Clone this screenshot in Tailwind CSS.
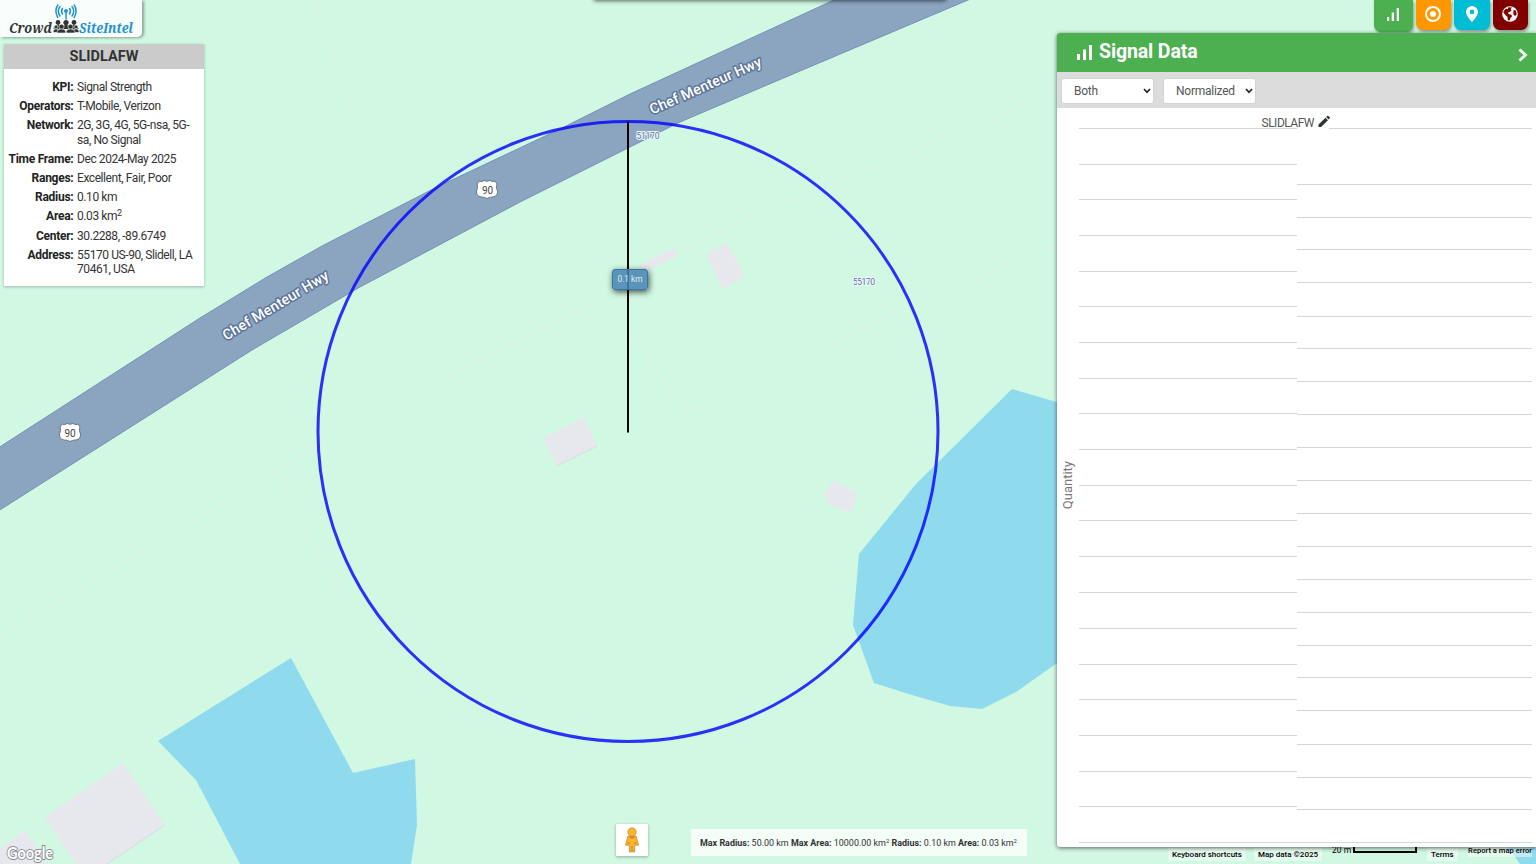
<!DOCTYPE html>
<html lang="en">
<head>
<meta charset="utf-8">
<title>Crowd SiteIntel</title>
<script src="https://cdn.jsdelivr.net/npm/@tailwindcss/browser@4"></script>
</head>
<body class="relative h-[864px] w-[1536px] overflow-hidden bg-[#d1f8e2] font-[Roboto,sans-serif] text-[#333]">

<!-- Map -->
<svg class="absolute inset-0" width="1536" height="864" viewBox="0 0 1536 864">
  <g fill="none" stroke="#d8f2e3" stroke-width="1.500">
    <path d="M0 638L220 505L330 438L470 366L560 320L730 226L1056 92"/>
    <path d="M275 470L350 610M520 742L620 815M635 335L685 413L900 310L1056 245M290 40L318 0L350 105"/>
  </g>
  <path d="M-5 450L200 318L267 277L322 246L355 229L437 187L560 129L630 94L834 0L840 -5H980L968 0L800 71L680 122L628 148L520 202L360 287L252 350L-5 513Z" fill="#8ba5c1" stroke="#7691b5"/>
  <g fill="#90daee">
    <path d="M158 741L291 658L353 773L415 759L417 825L411 864H240L196 780Z"/>
    <path d="M1060 403L1012 389L916 484L859 554L853 625L874 683L912 695L950 706L982 709L1016 692L1060 661Z"/>
    <path d="M1508 847L1520 864H1536V847Z"/>
  </g>
  <g fill="#e7e8ee">
    <path d="M45 817L123 763L165 825L107 864H76Z"/>
    <path d="M0 848L25 830L48 864H0Z"/>
    <path d="M543 438L584 417L597 446L557 466Z"/>
    <path d="M824 494L834 480L858 493L850 513L828 504Z"/>
    <path d="M706 254L727 243L745 276L723 289Z"/>
    <path d="M640 264L674 248L679 255L645 271Z"/>
  </g>
  <path d="M557 466L597 446M107 864L165 825" stroke="#d9dae1" fill="none"/>
  <g font-family="Roboto, sans-serif" font-size="14.500" font-weight="500" fill="#fff" stroke="#5d7599" stroke-width="3" stroke-linejoin="round" paint-order="stroke" text-anchor="middle">
    <text transform="translate(278 309.500) rotate(-31)" textLength="121">Chef Menteur Hwy</text>
    <text transform="translate(707.500 90) rotate(-24)" textLength="121">Chef Menteur Hwy</text>
  </g>
  <g font-family="Roboto, sans-serif" font-size="8.500" fill="#5b72a0" stroke="#eef6fa" stroke-width="2" paint-order="stroke" text-anchor="middle">
    <text x="648" y="138.500" textLength="23">51170</text>
    <text x="864" y="284.500" textLength="22">55170</text>
  </g>
  <g fill="#fff" stroke="#6e7780">
    <path d="M479 181Q482 182.500 484 180.500Q487 182 490 180.500Q493 182.500 495 181L497 184Q495.500 187 497.500 191Q498 196 493 197Q489 197 487 198.500Q485 197 481 197Q476 196 476.500 191Q478.500 187 477 184Z"/>
    <path transform="translate(-417 243)" d="M479 181Q482 182.500 484 180.500Q487 182 490 180.500Q493 182.500 495 181L497 184Q495.500 187 497.500 191Q498 196 493 197Q489 197 487 198.500Q485 197 481 197Q476 196 476.500 191Q478.500 187 477 184Z"/>
  </g>
  <g font-family="Roboto, sans-serif" font-size="10" fill="#444" text-anchor="middle">
    <text x="487.500" y="194">90</text><text x="70" y="437">90</text>
  </g>
  <circle cx="628" cy="431.500" r="310" fill="none" stroke="#0000ff" stroke-opacity=".8" stroke-width="3"/>
  <path d="M628 121.500V432.500" stroke="#000" stroke-width="2"/>
  <text x="7" y="858.500" font-family="Lato, sans-serif" font-size="17" font-weight="bold" fill="#fff" stroke="#8b9095" stroke-width="2" paint-order="stroke" textLength="46" lengthAdjust="spacingAndGlyphs">Google</text>
</svg>

<div class="absolute left-[612px] top-[269px] flex h-[21px] w-9 items-center justify-center rounded-[3px] border border-[#3c75a0] bg-[#4682b4]/85 text-[8.300px] text-white/80 shadow-[1px_2px_6px_rgba(0,0,0,.7)]">0.1 km</div>
<div class="absolute -top-5 left-[593px] h-5 w-[354px] rounded bg-white shadow-[0_1px_4px_rgba(0,0,0,.6)]"></div>

<!-- Logo -->
<div class="absolute left-0 top-0 h-[37px] w-[142px] rounded-br-[5px] bg-white/85 shadow-[2px_1px_3px_rgba(0,0,0,.35)]">
  <svg width="142" height="37" viewBox="0 0 142 37">
    <g font-family="Noto Serif, DejaVu Serif, serif" font-size="14" font-style="italic" font-weight="bold">
      <text x="9" y="33" fill="#333" textLength="43" lengthAdjust="spacingAndGlyphs">Crowd</text>
      <text x="79" y="33" fill="#2591cc" textLength="54" lengthAdjust="spacingAndGlyphs">SiteIntel</text>
    </g>
    <g fill="none" stroke="#2492cf" stroke-width="1.500" stroke-linecap="round">
      <path d="M66 12V19M62.500 8.500Q60.500 11 62.500 14M69.500 8.500Q71.500 11 69.500 14M60 6.500Q56.500 11 60 16M72 6.500Q75.500 11 72 16M57.800 5Q54 11 57.800 17.500M74.200 5Q78 11 74.200 17.500"/>
    </g>
    <circle cx="66" cy="11" r="2" fill="#2492cf"/>
    <g fill="#333">
      <circle cx="58" cy="22.500" r="2.400"/><circle cx="66" cy="22.500" r="2.600"/><circle cx="74" cy="22.500" r="2.400"/>
      <path d="M53.500 29Q54 25 58 25T62 29ZM62 29Q62 25 66 25T70 29ZM70 29Q70 25 74 25T78.500 29Z"/>
      <g stroke="#f5fefa" stroke-width=".6">
        <circle cx="56" cy="27" r="1.900"/><circle cx="76" cy="27" r="1.900"/>
        <path d="M53 32.500Q53 28.800 56 28.800T59.500 32.500ZM72.500 32.500Q72.500 28.800 76 28.800T79 32.500Z"/>
        <circle cx="61.500" cy="26.800" r="2.600"/><circle cx="70.500" cy="26.800" r="2.600"/>
        <path d="M57 33Q57 29 61.500 29T66 33ZM66 33Q66 29 70.500 29T75 33Z"/>
      </g>
    </g>
  </svg>
</div>

<!-- Site summary -->
<section class="absolute left-1 top-11 h-[242px] w-[200px] bg-white shadow-[0_1px_3px_rgba(0,0,0,.25)]">
  <h2 class="flex h-[25px] items-center justify-center bg-[#cbcbcb] pt-px text-[14.500px] font-bold">SLIDLAFW</h2>
  <dl class="grid grid-cols-[69.500px_1fr] gap-x-[3.500px] gap-y-[5px] pt-[11px] text-[12px] leading-[14.200px] tracking-[-0.420px] [&>dt]:text-right [&>dt]:tracking-[-0.250px] [&>dt]:font-bold [&>dt]:whitespace-nowrap [&>dt]:text-[#222]">
    <dt>KPI:</dt><dd>Signal Strength</dd>
    <dt>Operators:</dt><dd>T-Mobile, Verizon</dd>
    <dt>Network:</dt><dd>2G, 3G, 4G, 5G-nsa, 5G-<br>sa, No Signal</dd>
    <dt>Time Frame:</dt><dd>Dec 2024-May 2025</dd>
    <dt>Ranges:</dt><dd>Excellent, Fair, Poor</dd>
    <dt>Radius:</dt><dd>0.10 km</dd>
    <dt>Area:</dt><dd>0.03 km<sup class="text-[9px] leading-none">2</sup></dd>
    <dt>Center:</dt><dd>30.2288, -89.6749</dd>
    <dt>Address:</dt><dd>55170 US-90, Slidell, LA<br>70461, USA</dd>
  </dl>
</section>

<!-- Street view figure -->
<div class="absolute left-[616px] top-[824px] flex size-8 items-center justify-center bg-white shadow-[0_1px_3px_rgba(0,0,0,.3)]">
  <svg width="16" height="26" viewBox="0 0 16 26"><path d="M4 9L1.500 18L4 18.500L5 15L5.500 25H7.700L8 19L8.500 25H10.500L11 15L12 18.500L14.500 18L12 9Z" fill="#fbb52a" stroke="#c68a2c" stroke-width=".8"/><circle cx="8" cy="5" r="4.200" fill="#fbb52a" stroke="#c68a2c" stroke-width=".7"/><path d="M5 9.500L8 12L11 9.500Z" fill="#e0762b"/></svg>
</div>
<div class="absolute left-[691px] top-[829px] flex h-[27px] w-[336px] items-center bg-white/75 pl-[9px] pt-px text-[8.950px] whitespace-nowrap">
  <p class="leading-none"><b>Max Radius:</b> 50.00 km <b>Max Area:</b> 10000.00 km<sup class="text-[6px]">2</sup> <b>Radius:</b> 0.10 km <b>Area:</b> 0.03 km<sup class="text-[6px]">2</sup></p>
</div>

<!-- Map attribution -->
<footer class="absolute left-[1168px] top-[844px] h-5 w-[368px] text-[8px] font-medium leading-[12px] text-black">
  <span class="absolute left-0 top-1 bg-white/45 px-1 pt-px whitespace-nowrap">Keyboard shortcuts</span>
  <span class="absolute left-[86px] top-1 bg-white/45 px-1 pt-px whitespace-nowrap">Map data ©2025</span>
  <span class="absolute left-[164px] top-0 text-[8.500px] font-normal whitespace-nowrap">20 m</span>
  <span class="absolute left-[185px] top-0 h-[9px] w-16 border-2 border-t-0 border-black"></span>
  <span class="absolute left-[259px] top-1 bg-white/45 px-1 pt-px">Terms</span>
  <span class="absolute right-1 top-px bg-white/45 text-[7.600px] whitespace-nowrap">Report a map error</span>
</footer>

<!-- Panel tabs -->
<nav class="absolute right-2 top-0 flex items-start gap-[3px] [&>span]:flex [&>span]:items-center [&>span]:justify-center [&>span]:rounded-b-[7px] [&>span]:shadow-[1px_2px_3px_rgba(0,0,0,.35)]">
  <span class="h-8 w-[38.500px] bg-[#4caf50] pb-1"><svg width="14" height="14" viewBox="0 0 14 14" fill="#fff"><path d="M1 10H3.200V14H1ZM5.700 5.500H8V14H5.700ZM10.700 1H13V14H10.700Z"/></svg></span>
  <span class="h-[30px] w-[35.500px] bg-[#ff9800] pb-[3px]"><svg width="18" height="18" viewBox="0 0 18 18"><circle cx="9" cy="9" r="7" fill="none" stroke="#fff" stroke-width="2"/><circle cx="9" cy="9" r="3" fill="#fff"/></svg></span>
  <span class="h-[30px] w-[35.500px] bg-[#00bcd4] pb-[2px]"><svg width="14" height="18" viewBox="0 0 14 18"><path fill="#fff" fill-rule="evenodd" d="M7 1A6 6 0 0 0 1 7C1 11 7 17 7 17S13 11 13 7A6 6 0 0 0 7 1ZM7 4.500A2.400 2.400 0 1 1 7 9.300A2.400 2.400 0 1 1 7 4.500Z"/></svg></span>
  <span class="h-[30px] w-[35.500px] bg-[#800000] pb-[3px]"><svg width="16" height="16" viewBox="0 0 16 16"><circle cx="8" cy="8" r="7.800" fill="#fff"/><path d="M6.500 1.200L10 1.500L8.800 3L9.500 4.500L8 5.800L6.600 6.200L6.300 8L9.500 8.700L10 10.500L8.500 12L7.500 14.700L5.800 14L5.500 11L3.500 9.300L1.300 6.200Q2 4 4 2.500L5.500 3.300ZM11.500 4.200L13.300 4Q14.700 6 14.700 8.600L13 10L11.300 8.300Z" fill="#800000"/></svg></span>
</nav>

<!-- Signal data panel -->
<aside class="absolute left-[1057px] top-[33px] flex h-[814px] w-[479px] flex-col rounded-l-[3px] bg-white shadow-[0_1px_4px_rgba(0,0,0,.6)]">
  <header class="flex h-[39px] shrink-0 items-center rounded-tl-[3px] bg-[#4caf50] pl-5 pr-2 text-white">
    <svg class="-mt-[2px]" width="16" height="16" viewBox="0 0 16 16" fill="#fff"><path d="M0 10H3V16H0ZM6 5.500H9V16H6ZM12 1H15V16H12Z"/></svg>
    <h1 class="-mt-px ml-[6px] text-[19.500px] font-bold leading-none tracking-[-0.120px]">Signal Data</h1>
    <svg class="ml-auto mt-1" width="11" height="14" viewBox="0 0 11 14" fill="none" stroke="#fff" stroke-width="2.800"><path d="M2.500 1.500L8.500 7L2.500 12.500"/></svg>
  </header>
  <div class="flex h-9 shrink-0 items-center gap-[9px] bg-[#dcdcdc] pl-1 pt-px text-[12px] tracking-[-0.250px] text-[#555]">
    <div class="flex h-[26px] w-[93px] items-center justify-between rounded-[3px] border border-[#d3d3d3] bg-white pl-3 pr-[2px]">Both<svg width="8" height="6" viewBox="0 0 8 6" fill="none" stroke="#222" stroke-width="1.700"><path d="M1 1L4 4.300L7 1"/></svg></div>
    <div class="flex h-[26px] w-[93px] items-center justify-between rounded-[3px] border border-[#d3d3d3] bg-white pl-3 pr-[2px]">Normalized<svg width="8" height="6" viewBox="0 0 8 6" fill="none" stroke="#222" stroke-width="1.700"><path d="M1 1L4 4.300L7 1"/></svg></div>
  </div>
  <div class="flex min-h-0 flex-1">
    <div class="flex w-[22px] shrink-0 items-center justify-center pt-[16px]"><span class="rotate-180 text-[13px] text-[#777] [writing-mode:vertical-rl]">Quantity</span></div>
    <svg width="457" height="739" viewBox="1079 108 457 739">
      <path stroke="#d6d6d6" d="M1079 128.500H1297M1079 164.500H1297M1079 199.500H1297M1079 235.500H1297M1079 271.500H1297M1079 306.500H1297M1079 342.500H1297M1079 378.500H1297M1079 413.500H1297M1079 449.500H1297M1079 485.500H1297M1079 520.500H1297M1079 556.500H1297M1079 592.500H1297M1079 628.500H1297M1079 664.500H1297M1079 699.500H1297M1079 735.500H1297M1079 771.500H1297M1079 806.500H1297M1079 842.500H1532M1329 128.500H1532M1297 184.500H1532M1297 217.500H1532M1297 249.500H1532M1297 282.500H1532M1297 316.500H1532M1297 348.500H1532M1297 381.500H1532M1297 414.500H1532M1297 447.500H1532M1297 480.500H1532M1297 513.500H1532M1297 546.500H1532M1297 579.500H1532M1297 612.500H1532M1297 645.500H1532M1297 677.500H1532M1297 710.500H1532M1297 744.500H1532M1297 777.500H1532M1297 809.500H1532"/>
      <text x="1261.500" y="126.500" font-size="12" fill="#555" font-family="Roboto, sans-serif" textLength="53">SLIDLAFW</text>
      <path fill="#333" d="M1318.500 127V124.500L1325.500 117.700L1328 120.200L1321 127ZM1326.200 117L1327.600 115.800Q1328 115.500 1328.500 116L1329.800 117.200Q1330.200 117.800 1329.800 118.200L1328.600 119.500Z"/>
    </svg>
  </div>
</aside>
</body>
</html>
